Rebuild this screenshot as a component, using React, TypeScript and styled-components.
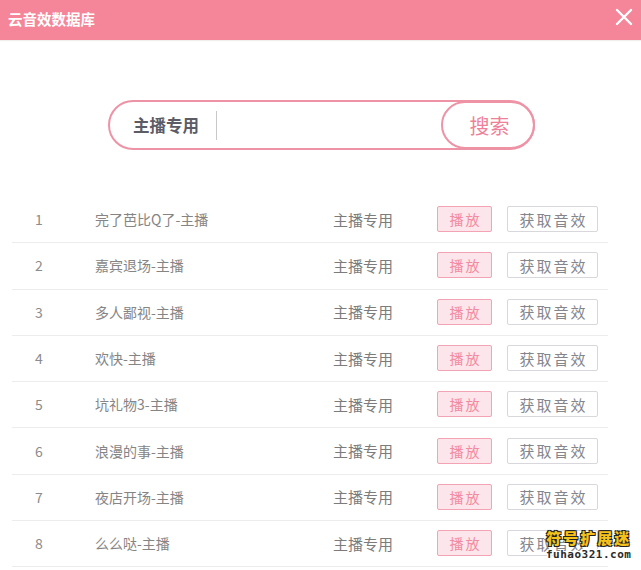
import React from 'react';
import styled, {createGlobalStyle} from "styled-components";

const GlobalStyle = createGlobalStyle`
    body {
        margin: 0;
        background: #ffffff;
        font-family: "Noto Sans CJK SC", sans-serif;
    }
`

// texts kept as unicode escapes
const TITLE = '\u4e91\u97f3\u6548\u6570\u636e\u5e93'
const HOST = '\u4e3b\u64ad\u4e13\u7528'
const SEARCH = '\u641c\u7d22'
const PLAY = '\u64ad\u653e'
const GET = '\u83b7\u53d6\u97f3\u6548'
const BRAND = '\u7b26\u53f7\u6269\u5c55\u8ff7'

const sounds = [
    '\u5b8c\u4e86\u82ad\u6bd4Q\u4e86-\u4e3b\u64ad',
    '\u5609\u5bbe\u9000\u573a-\u4e3b\u64ad',
    '\u591a\u4eba\u9119\u89c6-\u4e3b\u64ad',
    '\u6b22\u5feb-\u4e3b\u64ad',
    '\u5751\u793c\u72693-\u4e3b\u64ad',
    '\u6d6a\u6f2b\u7684\u4e8b-\u4e3b\u64ad',
    '\u591c\u5e97\u5f00\u573a-\u4e3b\u64ad',
    '\u4e48\u4e48\u54d2-\u4e3b\u64ad',
]

export default function App() {
    return (
        <Dialog>
            <GlobalStyle/>
            <Header>
                <Title>{TITLE}</Title>
                <Close aria-label="close">
                    <svg width="18" height="18" viewBox="0 0 18 18">
                        <path d="M2 2L16 16M16 2L2 16" stroke="#fff" strokeWidth="2.4" strokeLinecap="round"/>
                    </svg>
                </Close>
            </Header>

            <SearchArea>
                <SearchBox>
                    <Label>{HOST}</Label>
                    <Divider/>
                    <Input/>
                    <SearchButton>{SEARCH}</SearchButton>
                </SearchBox>
            </SearchArea>

            <List>
                {sounds.map((name, i) => (
                    <Row key={i}>
                        <Index>{i + 1}</Index>
                        <Name>{name}</Name>
                        <Category>{HOST}</Category>
                        <PlayButton>{PLAY}</PlayButton>
                        <GetButton>{GET}</GetButton>
                    </Row>
                ))}
            </List>

            <Watermark>
                <Brand>{BRAND}</Brand>
                <Site>fuhao321.com</Site>
            </Watermark>
        </Dialog>
    );
}

const Dialog = styled.div`
    position: relative;
    width: 641px;
    height: 570px;
    overflow: hidden;
    background: #fff;
`

const Header = styled.div`
    height: 40px;
    background: #f5869a;
    display: flex;
    align-items: center;
    justify-content: space-between;
    padding: 0 8px 0 8px;
    box-shadow: 0 1px 1px #f3eeee;
`

const Title = styled.div`
    color: #fff;
    font-size: 14.5px;
    font-weight: 700;
    margin-top: -3px;
`

const Close = styled.div`
    width: 18px;
    height: 18px;
    margin-top: -6px;
    display: flex;
`

const SearchArea = styled.div`
    display: flex;
    padding: 60px 0 0 108px;
`

const SearchBox = styled.div`
    width: 427px;
    height: 50px;
    box-sizing: border-box;
    border: 2px solid #ee93a6;
    border-radius: 25px;
    display: flex;
    align-items: center;
    padding-left: 23px;
`

const Label = styled.span`
    font-size: 16.5px;
    font-weight: 700;
    color: #5c5c66;
    white-space: nowrap;
`

const Divider = styled.span`
    width: 1px;
    height: 29px;
    background: #c8c8c8;
    margin-left: 17px;
`

const Input = styled.div`
    flex: 1;
`

const SearchButton = styled.div`
    width: 94px;
    height: 48px;
    box-sizing: border-box;
    margin-right: -2px;
    border: 2px solid #ee93a6;
    border-radius: 24px;
    display: flex;
    align-items: center;
    justify-content: center;
    font-size: 20px;
    color: #ee8199;
    padding-left: 3px;
`

const List = styled.div`
    margin: 47px 33px 0 12px;
`

const Row = styled.div`
    height: 46.3px;
    box-sizing: border-box;
    border-bottom: 1px solid #ececec;
    display: grid;
    grid-template-columns: 83px 238px 104px 70px 91px;
    align-items: center;
    font-size: 14px;
    color: #808080;
    padding-bottom: 1px;
`

const Index = styled.span`
    padding-left: 23px;
    color: #8c8c8c;
`

const Name = styled.span`
    color: #858585;
    white-space: nowrap;
`

const Category = styled.span`
    font-size: 15px;
    color: #7c7c7c;
    white-space: nowrap;
`

const PlayButton = styled.div`
    width: 55px;
    height: 26px;
    box-sizing: border-box;
    border: 1px solid #f2a4b4;
    border-radius: 2px;
    background: #fde6eb;
    color: #f28aa0;
    display: flex;
    align-items: center;
    justify-content: center;
    font-size: 14px;
    letter-spacing: 2px;
    padding-left: 2px;
    white-space: nowrap;
`

const GetButton = styled.div`
    width: 91px;
    height: 26px;
    box-sizing: border-box;
    border: 1px solid #d8d8dc;
    border-radius: 2px;
    background: #fff;
    color: #85858c;
    display: flex;
    align-items: center;
    justify-content: center;
    font-size: 15px;
    letter-spacing: 2px;
    padding-left: 2px;
    white-space: nowrap;
`

const Watermark = styled.div`
    position: absolute;
    left: 546px;
    top: 530px;
    display: flex;
    flex-direction: column;
    align-items: center;
    line-height: 1;
`

const Brand = styled.span`
    font-size: 15px;
    font-weight: 900;
    letter-spacing: 2px;
    color: #f5c21b;
    white-space: nowrap;
    text-shadow: -1px -1px 0 #222, 1px -1px 0 #222, -1px 1px 0 #222, 1px 1px 0 #222;
`

const Site = styled.span`
    font-family: "DejaVu Sans Mono", monospace;
    font-size: 11px;
    font-weight: 700;
    letter-spacing: 0.5px;
    color: #2a2a2a;
    margin-top: 4px;
    white-space: nowrap;
    text-shadow: -1px -1px 0 #fff, 1px -1px 0 #fff, -1px 1px 0 #fff, 1px 1px 0 #fff;
`
